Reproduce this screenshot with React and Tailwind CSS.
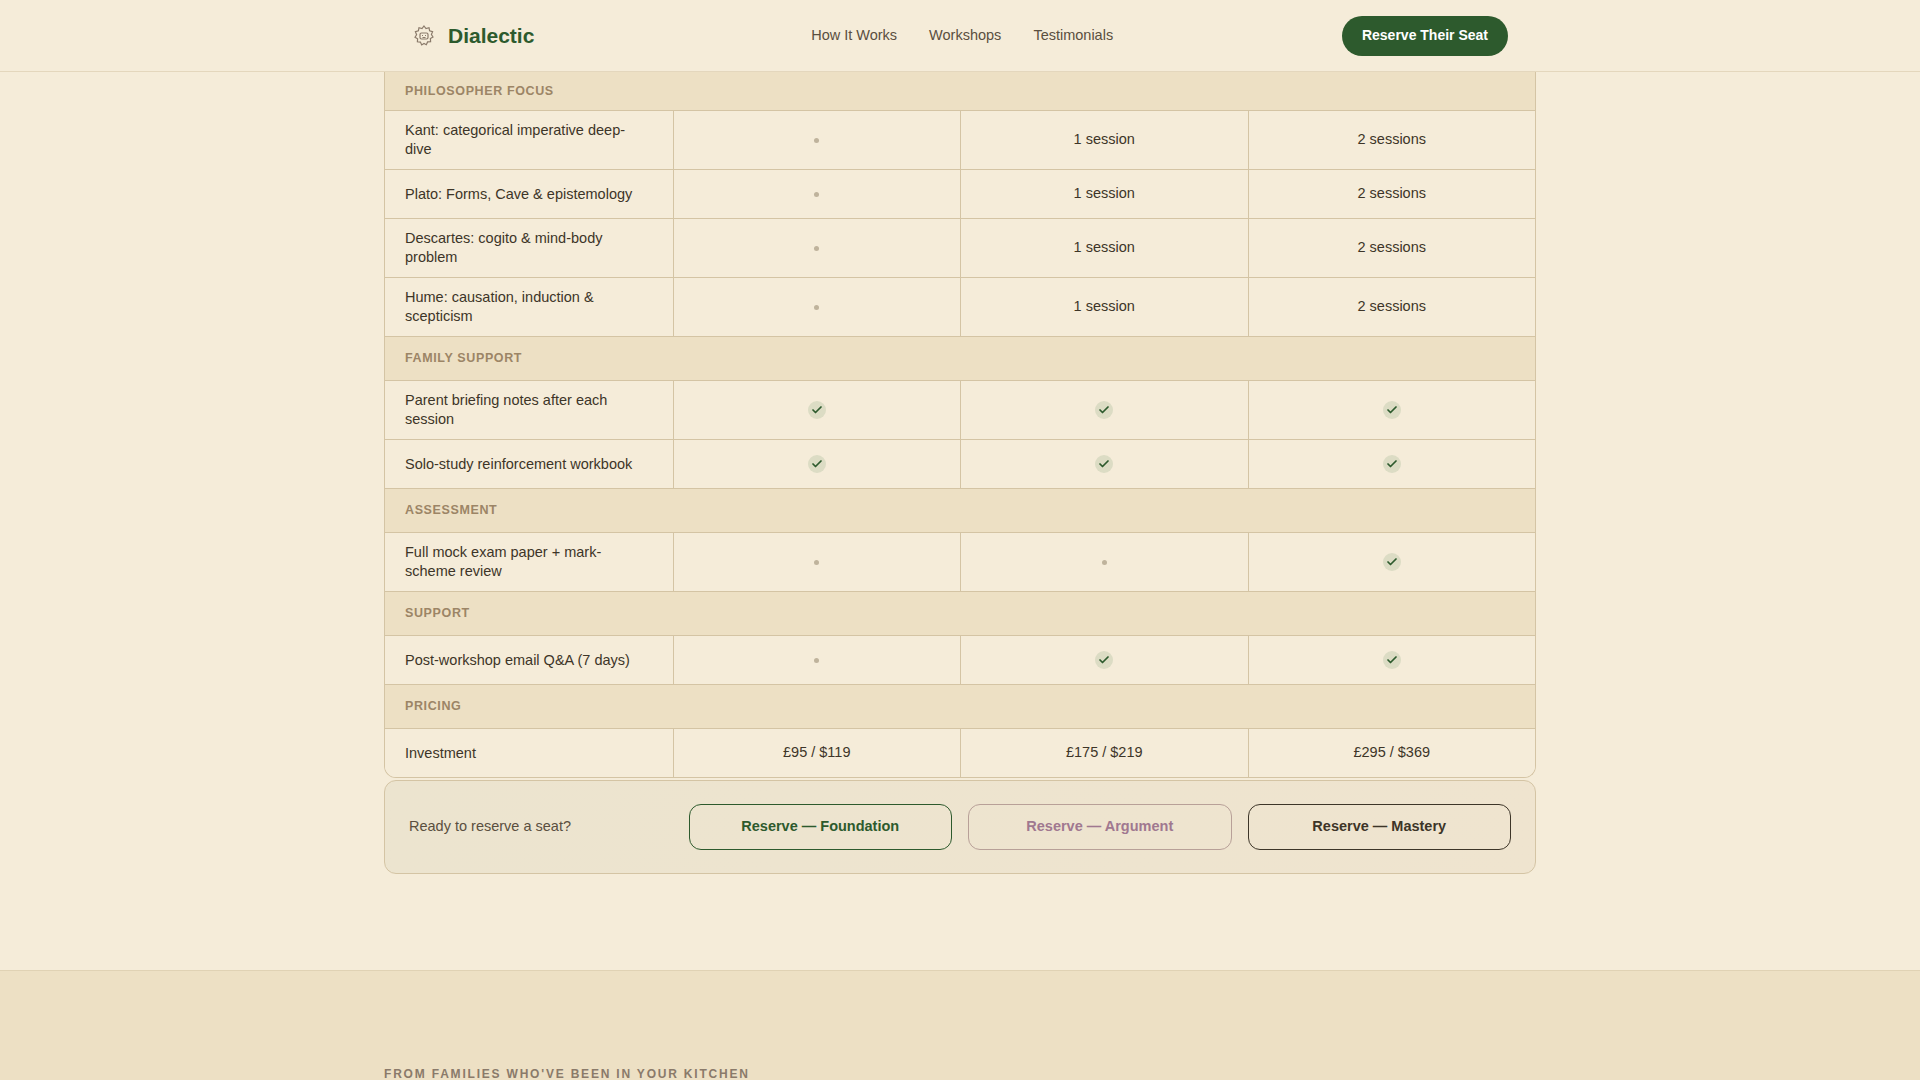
import { Check } from "lucide-react";

const rows = [
  { section: "Philosopher Focus" },
  { label: "Kant: categorical imperative deep-dive", v: ["dot", "1 session", "2 sessions"] },
  { label: "Plato: Forms, Cave & epistemology", v: ["dot", "1 session", "2 sessions"] },
  { label: "Descartes: cogito & mind-body problem", v: ["dot", "1 session", "2 sessions"] },
  { label: "Hume: causation, induction & scepticism", v: ["dot", "1 session", "2 sessions"] },
  { section: "Family Support" },
  { label: "Parent briefing notes after each session", v: ["check", "check", "check"] },
  { label: "Solo-study reinforcement workbook", v: ["check", "check", "check"] },
  { section: "Assessment" },
  { label: "Full mock exam paper + mark-scheme review", v: ["dot", "dot", "check"] },
  { section: "Support" },
  { label: "Post-workshop email Q&A (7 days)", v: ["dot", "check", "check"] },
  { section: "Pricing" },
  { label: "Investment", v: ["£95 / $119", "£175 / $219", "£295 / $369"] },
];

function Value({ v }) {
  if (v === "dot") return <span className="block h-[5px] w-[5px] rounded-full bg-[#bfb39c]" />;
  if (v === "check")
    return (
      <span className="flex h-[18px] w-[18px] items-center justify-center rounded-full bg-[#dcdcc4]">
        <Check className="h-3 w-3 text-[#2d5a2d]" strokeWidth={3.5} />
      </span>
    );
  return <span>{v}</span>;
}

function Logo() {
  return (
    <svg viewBox="0 0 24 24" className="h-6 w-6" fill="none" stroke="#8a7a6a" strokeWidth="1.2">
      <path d="M12 2l2 2.5 3-.8.6 3 3 1-1.2 2.8 1.6 2.5-2.6 1.6.2 3-3 .3-1.3 2.8L12 19.5l-2.3 1.4-1.3-2.8-3-.3.2-3L3 13.2l1.6-2.5L3.4 7.7l3-1 .6-3 3 .8z" />
      <rect x="8" y="9" width="8" height="6" rx="1.5" />
      <path d="M10 11.5h1M13 11.5h1M10.5 13.5h3" />
    </svg>
  );
}

export default function App() {
  return (
    <div className="min-h-screen bg-[#f5ecd9] font-[family-name:Liberation_Sans,Arial,sans-serif] text-[#3d3528]">
      <header className="h-[72px] border-b border-[#e4d7bd] bg-[#f5ecd9]">
        <div className="mx-auto flex h-full w-[1152px] items-center justify-between px-7">
          <div className="flex items-center gap-3">
            <Logo />
            <span className="text-[21px] font-bold text-[#2d5a2d]">Dialectic</span>
          </div>
          <nav className="flex gap-8 pl-12 text-[14.5px] text-[#5a4f40]">
            <span>How It Works</span>
            <span>Workshops</span>
            <span>Testimonials</span>
          </nav>
          <button className="h-10 rounded-full bg-[#2d5a2d] px-5 text-[14px] font-bold text-white">
            Reserve Their Seat
          </button>
        </div>
      </header>

      <div className="mx-auto w-[1152px]">
        <div className="overflow-hidden rounded-b-xl border-x border-b border-[#d4c4a4] text-[14.5px]">
          {rows.map((r, i) =>
            r.section ? (
              <div
                key={i}
                className={`flex items-center border-[#d4c4a4] bg-[#ede0c4] px-5 text-[12.5px] font-bold uppercase tracking-wider text-[#9c8566] ${
                  i === 0 ? "h-[39px] border-b" : "h-[45px] border-y"
                }`}
              >
                {r.section}
              </div>
            ) : (
              <div
                key={i}
                className={`grid grid-cols-4 bg-[#f5ecd9] ${rows[i - 1].section ? "" : "border-t border-[#d4c4a4]"}`}
              >
                <div className="flex min-h-[48px] items-center py-[10px] pl-5 pr-8 leading-[19px]">{r.label}</div>
                {r.v.map((v, j) => (
                  <div key={j} className="flex items-center justify-center border-l border-[#d4c4a4]">
                    <Value v={v} />
                  </div>
                ))}
              </div>
            )
          )}
        </div>

        <div className="mt-[2px] grid h-[94px] grid-cols-4 items-center gap-4 rounded-xl border border-[#d4c4a4] bg-gradient-to-r from-[#ece4cf] to-[#efe4cf] px-6 text-[14.5px]">
          <span className="text-[#5a4f40]">Ready to reserve a seat?</span>
          <button className="h-[46px] rounded-xl border border-[#2d5a2d] font-bold text-[#2d5a2d]">
            Reserve — Foundation
          </button>
          <button className="h-[46px] rounded-xl border border-[#b8a098] font-bold text-[#a07890]">
            Reserve — Argument
          </button>
          <button className="h-[46px] rounded-xl border border-[#3d3528] font-bold text-[#3d3528]">
            Reserve — Mastery
          </button>
        </div>
      </div>

      <div className="mt-[96px] border-t border-[#e0d2b4] bg-[#ede0c4] pt-[94px] pb-20">
        <div className="mx-auto w-[1152px] text-[12px] font-bold uppercase tracking-[0.15em] text-[#8a7a6a]">
          From families who've been in your kitchen
        </div>
      </div>
    </div>
  );
}
